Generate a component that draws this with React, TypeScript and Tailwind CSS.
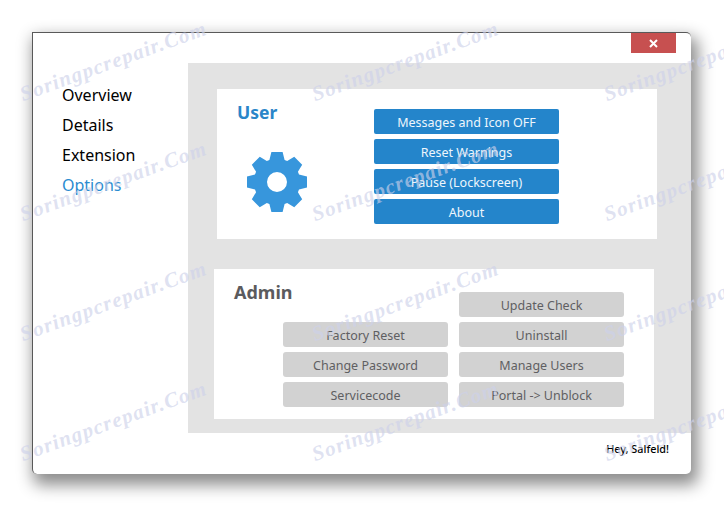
function gearPath() {
    const cx = 30;
    const cy = 30;
    const pts: string[] = [];

    for (let i = 0; i < 8; i++) {
        const a = (i * Math.PI) / 4 - Math.PI / 2;
        const point = (r: number, w: number) => {
            const x = cx + r * Math.cos(a) - w * Math.sin(a);
            const y = cy + r * Math.sin(a) + w * Math.cos(a);
            return `${x.toFixed(2)} ${y.toFixed(2)}`;
        };
        pts.push(point(22, -7.6), point(30, -5.6), point(30, 5.6), point(22, 7.6));
    }

    const ring = `M${pts.join('L')}Z`;
    const hole = 'M30 20a10 10 0 1 0 0 20a10 10 0 1 0 0 -20Z';

    return `${ring}${hole}`;
}

function BlueButton({ label }: { label: string }) {
    return (
        <button
            type="button"
            className="flex h-[25px] w-[185px] items-center justify-center rounded-[2px] bg-[#2485cb] pt-[4px] text-[12.5px] leading-none text-[#eef6fc]"
        >
            {label}
        </button>
    );
}

function GreyButton({ label }: { label: string }) {
    return (
        <button
            type="button"
            className="flex h-[25px] w-[165px] items-center justify-center rounded-[3px] bg-[#d2d2d2] pt-[4px] text-[12.5px] leading-none text-[#5f5f62]"
        >
            {label}
        </button>
    );
}

const navItems = ['Overview', 'Details', 'Extension'];
const marks = Array.from({ length: 12 }, (_, i) => i);

export default function App() {
    return (
        <div className="relative h-[507px] w-[724px] overflow-hidden bg-white pt-[32px] pl-[32px] font-['Noto_Sans',sans-serif]">
            <div className="flex h-[442px] w-[659px] rounded-[5px] rounded-tl-none border-t border-l border-t-[#595959] border-l-[#595959] bg-white shadow-[4px_8px_16px_3px_rgba(0,0,0,0.45)]">
                <nav className="flex w-[155px] shrink-0 flex-col pt-[47px] pl-[29px]">
                    {navItems.map((item) => (
                        <span
                            key={item}
                            className="h-[30px] text-[16px] leading-[30px] text-black"
                        >
                            {item}
                        </span>
                    ))}
                    <span className="h-[30px] text-[16px] leading-[30px] text-[#2a8bd0]">
                        Options
                    </span>
                </nav>

                <div className="flex min-w-0 flex-1 flex-col">
                    <div className="flex h-[30px] justify-end pr-[15px]">
                        <button
                            type="button"
                            className="flex h-[20px] w-[45px] items-center justify-center bg-[#c75050]"
                        >
                            <svg width="9" height="9" viewBox="0 0 9 9">
                                <path
                                    d="M1 1L8 8M8 1L1 8"
                                    stroke="white"
                                    strokeWidth="2"
                                />
                            </svg>
                        </button>
                    </div>

                    <div className="h-[370px] bg-[#e3e3e3] pt-[26px]">
                        <section className="ml-[29px] flex h-[150px] w-[440px] bg-white">
                            <div className="w-[157px] shrink-0 pt-[8px] pl-[20px]">
                                <h2 className="text-[17.5px] leading-[30px] font-bold text-[#2a86c9]">
                                    User
                                </h2>
                                <svg
                                    className="mt-[25px] ml-[10px]"
                                    width="60"
                                    height="60"
                                    viewBox="0 0 60 60"
                                >
                                    <path
                                        d={gearPath()}
                                        fill="#3796dc"
                                        fillRule="evenodd"
                                    />
                                </svg>
                            </div>
                            <div className="flex flex-col gap-[5px] pt-[20px]">
                                <BlueButton label="Messages and Icon OFF" />
                                <BlueButton label="Reset Warnings" />
                                <BlueButton label="Pause (Lockscreen)" />
                                <BlueButton label="About" />
                            </div>
                        </section>

                        <section className="mt-[30px] ml-[26px] flex h-[150px] w-[440px] bg-white">
                            <div className="w-[69px] shrink-0 pt-[8px] pl-[20px]">
                                <h2 className="text-[18px] leading-[30px] font-bold whitespace-nowrap text-[#5b5b5e]">
                                    Admin
                                </h2>
                            </div>
                            <div className="flex flex-col gap-[5px] pt-[53px]">
                                <GreyButton label="Factory Reset" />
                                <GreyButton label="Change Password" />
                                <GreyButton label="Servicecode" />
                            </div>
                            <div className="ml-[11px] flex flex-col gap-[5px] pt-[23px]">
                                <GreyButton label="Update Check" />
                                <GreyButton label="Uninstall" />
                                <GreyButton label="Manage Users" />
                                <GreyButton label="Portal -> Unblock" />
                            </div>
                        </section>
                    </div>

                    <div className="flex flex-1 justify-end pt-[8px] pr-[22px]">
                        <span className="text-[10.8px] leading-[16px] font-medium text-black">
                            Hey, Salfeld!
                        </span>
                    </div>
                </div>
            </div>

            <div className="pointer-events-none absolute top-0 left-[-32px] grid w-[876px] grid-cols-3 grid-rows-[120px_120px_120px_120px] pt-[2px]">
                {marks.map((mark) => (
                    <div key={mark} className="flex h-[120px] items-center justify-center">
                        <span className="-rotate-[20deg] font-['Liberation_Serif',serif] text-[21px] font-bold tracking-[1.2px] whitespace-nowrap text-[#cdd1ea]/65 italic">
                            Soringpcrepair.Com
                        </span>
                    </div>
                ))}
            </div>
        </div>
    );
}
